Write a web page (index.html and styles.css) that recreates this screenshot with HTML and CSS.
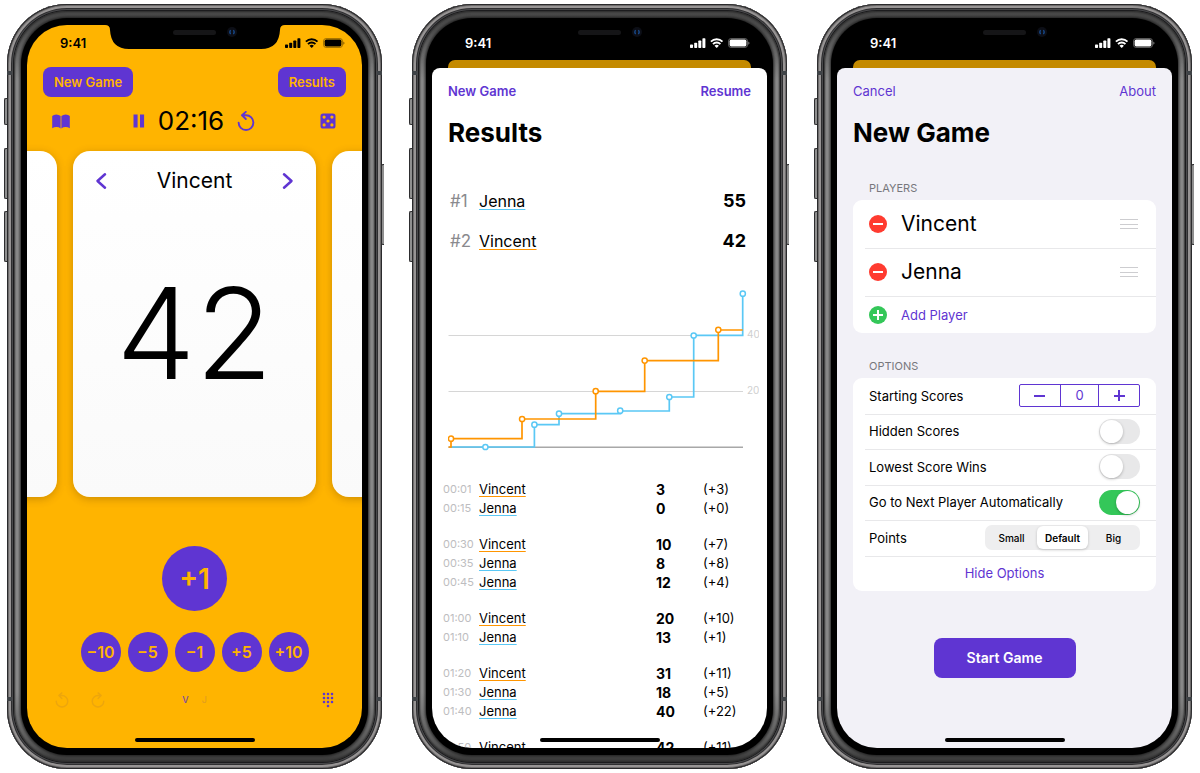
FILE: index.html
```html
<!DOCTYPE html>
<html lang="en">
<head>
<meta charset="utf-8">
<title>Score Keeper</title>
<link rel="stylesheet" href="styles.css">
</head>
<body>
<svg class="symbols" aria-hidden="true">
  <symbol id="notch" viewBox="0 0 180 24">
    <path d="M0 0Q5 0 5 5Q6 24 24 24H156Q174 24 175 5Q175 0 180 0Z" fill="#000"/>
    <rect x="68" y="5" width="43" height="5" rx="2.5" fill="#151517"/>
    <circle cx="127" cy="7" r="5" fill="#0c0e16"/>
    <path d="M125.600 5.200Q124 7.200 125.600 9.200M128.400 5.200Q130 7.200 128.400 9.200" fill="none" stroke="#174a8c" stroke-width="1.300"/>
  </symbol>
  <symbol id="status" viewBox="0 0 60 12">
    <g fill="currentColor">
      <rect x="0" y="7.500" width="3" height="3.500" rx=".7"/>
      <rect x="4.200" y="5.800" width="3" height="5.200" rx=".7"/>
      <rect x="8.300" y="3.600" width="3" height="7.400" rx=".7"/>
      <rect x="12.400" y="1.200" width="3" height="9.800" rx=".7"/>
      <path d="M26.700 11.100l2.200-2.300a3.200 3.200 0 0 0-4.400 0z"/>
      <rect x="39.600" y="2.600" width="16.800" height="6.800" rx="1.600"/>
      <path d="M58.300 4.500q1.200.5 1.200 1.600t-1.200 1.600z" opacity=".5"/>
    </g>
    <path d="M20.900 4.600a8.300 8.300 0 0 1 11.600 0M23 7.100a5.200 5.200 0 0 1 7.400 0" fill="none" stroke="currentColor" stroke-width="1.900"/>
    <rect x="38.500" y="1.500" width="19" height="9" rx="2.600" fill="none" stroke="currentColor" opacity=".35"/>
  </symbol>
  <symbol id="restart" viewBox="0 0 18 20">
    <path d="M1.600 11.600A7.400 7.400 0 1 0 9 4.200H5.200M8.800.9L5 4.300L8.800 8" fill="none" stroke="currentColor" stroke-width="1.900" stroke-linecap="round" stroke-linejoin="round"/>
  </symbol>
</svg>

<main class="phones">
  <section class="phone" aria-label="Game">
    <i class="key key-mute"></i><i class="key key-up"></i><i class="key key-down"></i><i class="key key-power"></i>
    <div class="band"><div class="glass"><div class="screen game">
      <svg class="notch" aria-hidden="true"><use href="#notch"/></svg>
      <header class="status"><span>9:41</span><svg aria-hidden="true"><use href="#status"/></svg></header>
      <nav class="actions">
        <button class="solid" type="button">New Game</button>
        <button class="solid" type="button">Results</button>
      </nav>
      <div class="tools">
        <button class="icon" type="button" aria-label="Rules">
          <svg width="18" height="15" viewBox="0 0 18 15"><path d="M8.600 2.100Q6.800.4 4.300.4Q1.700.4.200 1.900V14.300Q2 13.100 4.500 13.100Q6.900 13.100 8.600 14.400ZM9.400 2.100Q11.200.4 13.700.4Q16.300.4 17.800 1.900V14.300Q16 13.100 13.500 13.100Q11.100 13.100 9.400 14.400Z" fill="currentColor"/></svg>
        </button>
        <div class="timer">
          <button class="icon" type="button" aria-label="Pause">
            <svg width="12" height="14" viewBox="0 0 12 14"><path d="M.5.500H4.600V13.500H.5ZM7 .5H11.100V13.500H7Z" fill="currentColor"/></svg>
          </button>
          <time>02:16</time>
          <button class="icon" type="button" aria-label="Restart timer"><svg width="18" height="20"><use href="#restart"/></svg></button>
        </div>
        <button class="icon die" type="button" aria-label="Roll dice">
          <svg width="16" height="16" viewBox="0 0 16 16"><rect x=".5" y=".5" width="15" height="15" rx="2.600" fill="currentColor"/><g fill="#ffb400"><circle cx="4.100" cy="4.100" r="1.600"/><circle cx="11.900" cy="4.100" r="1.600"/><circle cx="8" cy="8" r="1.600"/><circle cx="4.100" cy="11.900" r="1.600"/><circle cx="11.900" cy="11.900" r="1.600"/></g></svg>
        </button>
      </div>
      <div class="cards">
        <article class="card"></article>
        <article class="card">
          <div class="card-head">
            <button class="icon" type="button" aria-label="Previous player"><svg width="12" height="18" viewBox="0 0 12 18"><path d="M10 2.300L2.500 9L10 15.700" fill="none" stroke="currentColor" stroke-width="2.500" stroke-linecap="round" stroke-linejoin="round"/></svg></button>
            <h2>Vincent</h2>
            <button class="icon" type="button" aria-label="Next player"><svg width="12" height="18" viewBox="0 0 12 18"><path d="M2 2.300L9.500 9L2 15.700" fill="none" stroke="currentColor" stroke-width="2.500" stroke-linecap="round" stroke-linejoin="round"/></svg></button>
          </div>
          <p class="score">42</p>
        </article>
        <article class="card"></article>
      </div>
      <button class="round big" type="button">+1</button>
      <div class="steps">
        <button class="round" type="button">−10</button>
        <button class="round" type="button">−5</button>
        <button class="round" type="button">−1</button>
        <button class="round" type="button">+5</button>
        <button class="round" type="button">+10</button>
      </div>
      <footer class="bottom">
        <div class="history">
          <button class="icon" type="button" aria-label="Undo" disabled><svg width="14" height="16"><use href="#restart"/></svg></button>
          <button class="icon flip" type="button" aria-label="Redo" disabled><svg width="14" height="16"><use href="#restart"/></svg></button>
        </div>
        <div class="pager"><b>V</b><span>J</span></div>
        <button class="icon pad" type="button" aria-label="Keypad">
          <svg width="12" height="16" viewBox="0 0 12 16"><path d="M1 1H3V3H1ZM5 1H7V3H5ZM9 1H11V3H9ZM1 5H3V7H1ZM5 5H7V7H5ZM9 5H11V7H9ZM1 9H3V11H1ZM5 9H7V11H5ZM9 9H11V11H9ZM5 13H7V15H5Z" fill="currentColor" stroke="currentColor" stroke-width=".3"/></svg>
        </button>
      </footer>
      <i class="home"></i>
    </div></div></div>
  </section>

  <section class="phone" aria-label="Results">
    <i class="key key-mute"></i><i class="key key-up"></i><i class="key key-down"></i><i class="key key-power"></i>
    <div class="band"><div class="glass"><div class="screen dark">
      <svg class="notch" aria-hidden="true"><use href="#notch"/></svg>
      <header class="status"><span>9:41</span><svg aria-hidden="true"><use href="#status"/></svg></header>
      <div class="behind"></div>
      <div class="sheet">
        <nav class="bar medium"><a href="#">New Game</a><a href="#">Resume</a></nav>
        <h1>Results</h1>
        <ol class="ranks">
          <li><span>#1</span><u class="jenna">Jenna</u><b>55</b></li>
          <li><span>#2</span><u class="vincent">Vincent</u><b>42</b></li>
        </ol>
        <svg class="chart" viewBox="0 0 311 166" role="img" aria-label="Scores over time">
          <path d="M.5 49.500H295M.5 105.500H295" stroke="#d6d6d6"/>
          <path d="M.5 161.200H295" stroke="#a8a8a8" stroke-width="1.400"/>
          <g fill="none" stroke-width="1.700">
            <path stroke="#5ac8f5" d="M3 161H86.400V138.700H111V127.700H172.400V125H221.300V111H245.700V49.400H294.700V8"/>
            <path stroke="#ff9500" d="M.5 161H3V152.700H74V133H147.700V105.400H196.700V74.700H270.300V44H294.700"/>
          </g>
          <g fill="#fff" stroke="#5ac8f5" stroke-width="1.500">
            <circle cx="37.400" cy="161" r="2.600"/><circle cx="86.400" cy="138.700" r="2.600"/><circle cx="111" cy="127.700" r="2.600"/><circle cx="172.200" cy="124.700" r="2.600"/><circle cx="221.300" cy="111" r="2.600"/><circle cx="245.700" cy="49.500" r="2.600"/><circle cx="294.800" cy="7.700" r="2.600"/>
          </g>
          <g fill="#fff" stroke="#ff9500" stroke-width="1.500">
            <circle cx="3" cy="152.700" r="2.600"/><circle cx="74.100" cy="133" r="2.600"/><circle cx="147.700" cy="105.200" r="2.600"/><circle cx="196.700" cy="74.600" r="2.600"/><circle cx="270.300" cy="43.800" r="2.600"/>
          </g>
          <text x="299" y="52">40</text><text x="299" y="108">20</text>
        </svg>
        <table class="log">
          <tbody>
            <tr><td>00:01</td><td><u class="vincent">Vincent</u></td><td>3</td><td>(+3)</td></tr>
            <tr><td>00:15</td><td><u class="jenna">Jenna</u></td><td>0</td><td>(+0)</td></tr>
          </tbody>
          <tbody>
            <tr><td>00:30</td><td><u class="vincent">Vincent</u></td><td>10</td><td>(+7)</td></tr>
            <tr><td>00:35</td><td><u class="jenna">Jenna</u></td><td>8</td><td>(+8)</td></tr>
            <tr><td>00:45</td><td><u class="jenna">Jenna</u></td><td>12</td><td>(+4)</td></tr>
          </tbody>
          <tbody>
            <tr><td>01:00</td><td><u class="vincent">Vincent</u></td><td>20</td><td>(+10)</td></tr>
            <tr><td>01:10</td><td><u class="jenna">Jenna</u></td><td>13</td><td>(+1)</td></tr>
          </tbody>
          <tbody>
            <tr><td>01:20</td><td><u class="vincent">Vincent</u></td><td>31</td><td>(+11)</td></tr>
            <tr><td>01:30</td><td><u class="jenna">Jenna</u></td><td>18</td><td>(+5)</td></tr>
            <tr><td>01:40</td><td><u class="jenna">Jenna</u></td><td>40</td><td>(+22)</td></tr>
          </tbody>
          <tbody>
            <tr><td>01:50</td><td><u class="vincent">Vincent</u></td><td>42</td><td>(+11)</td></tr>
          </tbody>
        </table>
      </div>
      <i class="home"></i>
    </div></div></div>
  </section>

  <section class="phone" aria-label="New game">
    <i class="key key-mute"></i><i class="key key-up"></i><i class="key key-down"></i><i class="key key-power"></i>
    <div class="band"><div class="glass"><div class="screen dark">
      <svg class="notch" aria-hidden="true"><use href="#notch"/></svg>
      <header class="status"><span>9:41</span><svg aria-hidden="true"><use href="#status"/></svg></header>
      <div class="behind"></div>
      <form class="sheet grouped">
        <nav class="bar"><a href="#">Cancel</a><a href="#">About</a></nav>
        <h1>New Game</h1>
        <h3>PLAYERS</h3>
        <ul class="group players">
          <li><button class="dot red" type="button" aria-label="Remove Vincent"></button><span>Vincent</span><i class="grip"></i></li>
          <li><button class="dot red" type="button" aria-label="Remove Jenna"></button><span>Jenna</span><i class="grip"></i></li>
          <li class="add"><button type="button"><i class="dot green"></i>Add Player</button></li>
        </ul>
        <h3 class="second">OPTIONS</h3>
        <div class="group options">
          <div class="row"><span>Starting Scores</span>
            <div class="stepper"><button class="minus" type="button" aria-label="Decrease"></button><output>0</output><button class="plus" type="button" aria-label="Increase"></button></div>
          </div>
          <div class="row"><label for="hidden">Hidden Scores</label><input class="switch" id="hidden" type="checkbox"></div>
          <div class="row"><label for="lowest">Lowest Score Wins</label><input class="switch" id="lowest" type="checkbox"></div>
          <div class="row"><label for="auto">Go to Next Player Automatically</label><input class="switch" id="auto" type="checkbox" checked></div>
          <div class="row"><span>Points</span>
            <div class="segments" role="radiogroup" aria-label="Points">
              <label><input type="radio" name="points">Small</label>
              <label><input type="radio" name="points" checked>Default</label>
              <label><input type="radio" name="points">Big</label>
            </div>
          </div>
          <div class="row center"><button class="link" type="button">Hide Options</button></div>
        </div>
        <button class="start" type="button">Start Game</button>
      </form>
      <i class="home"></i>
    </div></div></div>
  </section>
</main>
</body>
</html>
```

FILE: styles.css
```css
:root {
  --purple: #5f35d2;
  --yellow: #ffb400;
  --line: #e8e8ea;
}
* { box-sizing: border-box; }
body {
  margin: 0;
  background: #fff;
  color: #000;
  font-family: Inter, "Liberation Sans", sans-serif;
  font-size: 13px;
  line-height: 18px;
}
h1, h2, h3, p, ol, ul { margin: 0; padding: 0; }
ol, ul { list-style: none; }
button { margin: 0; padding: 0; border: 0; background: none; color: inherit; font: inherit; }
a { color: var(--purple); text-decoration: none; }
.symbols { position: absolute; width: 0; height: 0; }

/* Device frame */
.phones { display: flex; gap: 30px; height: 100vh; padding: 4px 8px 4px 7px; }
.phone {
  position: relative;
  flex: 1;
  display: flex;
  padding: 7px;
  border-radius: 60px;
  background: #1b1b1d;
  box-shadow: inset 0 0 0 1px #2a2a2c, inset 0 0 0 2px #6e6c6c, inset 0 0 0 4px #979494, inset 0 0 0 5px #2e2e30, inset 0 0 0 6px #4a4a4c;
}
.phone::before, .phone::after {
  content: "";
  position: absolute;
  inset: 67px 0 auto;
  height: 4px;
  background: linear-gradient(to right, #3f4347 5px, transparent 5px calc(100% - 5px), #3f4347 calc(100% - 5px));
}
.phone::after { inset: auto 0 68px; }
.band {
  flex: 1;
  display: flex;
  min-width: 0;
  padding: 7px;
  border-radius: 53px;
  background: linear-gradient(#484848, #505050 20px, #8c8c8c 70px, #8c8c8c calc(100% - 70px), #585858 calc(100% - 16px), #383838);
  box-shadow: inset 0 0 2px 1px #2a2a2a;
}
.glass { flex: 1; display: flex; min-width: 0; padding: 7px 6px; border-radius: 46px; background: #000; box-shadow: 0 0 3px 1px #1c1c1c; }
.screen {
  position: relative;
  flex: 1;
  display: flex;
  flex-direction: column;
  min-width: 0;
  border-radius: 40px;
  overflow: hidden;
}
.key { position: absolute; left: -3px; width: 3px; border: 1px solid #2d2d2f; border-right: 0; border-radius: 2px 0 0 2px; background: #8f8f8f; }
.key-mute { top: 94px; height: 27px; }
.key-up { top: 144px; height: 51px; }
.key-down { top: 207px; height: 51px; }
.key-power { top: 160px; left: auto; right: -2px; height: 81px; }
.notch { position: absolute; top: 0; left: calc(50% - 90px); width: 180px; height: 24px; }
.home { position: absolute; bottom: 6px; left: calc(50% - 60px); width: 120px; height: 4px; border-radius: 2px; background: #000; }
.status {
  display: flex;
  flex: none;
  align-items: center;
  justify-content: space-between;
  height: 35px;
  padding: 0 17px 0 33px;
  font-weight: 600;
}
.status svg { width: 60px; height: 12px; }

/* Game */
.game { background: var(--yellow); }
.icon { display: grid; place-items: center; color: var(--purple); }
.icon svg { display: block; }
.actions { display: flex; justify-content: space-between; margin-top: 7px; padding: 0 16px; }
.solid { height: 30px; padding: 0 11px; border-radius: 8px; background: var(--purple); color: var(--yellow); font-weight: 600; }
.tools { display: grid; grid-template-columns: 1fr auto 1fr; align-items: center; height: 48px; padding: 0 26px 0 25px; }
.tools > .icon { justify-self: start; }
.tools > .die { justify-self: end; }
.timer { display: flex; align-items: center; gap: 13px; }
.timer time { font-size: 26px; line-height: 30px; }
.cards { flex: 1; display: flex; justify-content: center; gap: 16px; min-height: 0; margin-top: 6px; }
.card {
  flex: none;
  display: flex;
  flex-direction: column;
  width: calc(100% - 92px);
  border-radius: 17px;
  background: linear-gradient(#fff, #fafafa);
  box-shadow: 0 2px 8px rgba(90, 50, 0, .3);
}
.card-head { display: flex; align-items: center; justify-content: space-between; height: 60px; padding: 0 22px; }
.card-head h2 { font-size: 21px; font-weight: 400; line-height: 28px; }
.score { flex: 1; display: grid; place-items: center; padding-bottom: 42px; font-size: 126px; font-weight: 300; line-height: 140px; }
.round { width: 40px; height: 40px; border-radius: 50%; background: var(--purple); color: var(--yellow); font-size: 16px; font-weight: 600; }
.big { align-self: center; flex: none; width: 65px; height: 65px; margin-top: 49px; font-size: 28px; }
.steps { display: flex; justify-content: center; gap: 7px; margin-top: 21px; }
.bottom { display: grid; grid-template-columns: 1fr auto 1fr; align-items: center; height: 20px; margin: 18px 28px 38px; }
.history { display: flex; gap: 22px; }
.history .icon { color: #eda60c; }
.flip { transform: scaleX(-1); }
.pager { display: flex; gap: 13px; font-size: 9px; color: #e09c20; }
.pager b { color: #7a4aa0; font-weight: 500; }
.pad { justify-self: end; }

/* Sheets */
.dark { background: #000; }
.dark .status { color: #fff; }
.behind { flex: none; height: 8px; margin: 0 16px; border-radius: 7px 7px 0 0; background: #c48a00; }
.sheet { flex: 1; min-height: 0; overflow: hidden; border-radius: 8px 8px 0 0; background: #fff; }
.grouped { padding: 0 16px; background: #f2f1f7; }
.bar { display: flex; align-items: center; justify-content: space-between; height: 46px; padding: 0 16px; }
.grouped .bar { padding: 0; }
.medium { font-weight: 600; }
h1 { padding-left: 16px; font-size: 26px; font-weight: 700; line-height: 38px; }
.grouped h1 { padding-left: 0; }

.ranks { margin: 29px 21px 25px 18px; font-size: 16px; }
.ranks li { display: grid; grid-template-columns: 29px 1fr auto; align-items: center; height: 40px; }
.ranks span { color: #8a8a8e; font-size: 17px; }
.ranks u { justify-self: start; }
.ranks b { font-size: 18px; }
u { text-decoration: underline; text-decoration-thickness: 1px; text-decoration-skip-ink: none; text-underline-offset: 2px; }
.jenna { text-decoration-color: #5ac8f5; }
.vincent { text-decoration-color: #ff9500; }
.chart { display: block; width: calc(100% - 24px); margin: 0 8px 28px 16px; }
.chart text { fill: #cfcfcf; font-size: 10px; }
.log { width: 100%; border-collapse: collapse; table-layout: fixed; }
.log td { height: 19px; padding: 0; line-height: 19px; }
.log tbody + tbody tr:first-child td { padding-top: 17px; }
.log td:nth-child(1) { width: 47px; padding-left: 11px; color: #bdbdc0; font-size: 11px; }
.log td:nth-child(3) { width: 47px; font-size: 14px; font-weight: 700; }
.log td:nth-child(4) { width: 64px; }

/* New game form */
h3 { height: 24px; margin-top: 24px; padding-left: 16px; color: #77777c; font-size: 11px; font-weight: 400; line-height: 24px; }
.second { margin-top: 21px; }
.group { border-radius: 9px; background: #fff; }
.players li, .row { position: relative; display: flex; align-items: center; padding: 0 16px; }
.players li + li::before, .row + .row::before { content: ""; position: absolute; inset: 0 0 auto 12px; height: 1px; background: var(--line); }
.players li { height: 48px; gap: 14px; }
.players span { flex: 1; font-size: 21px; line-height: 28px; }
.players .add { height: 37px; }
.add button { display: flex; align-items: center; gap: 14px; color: var(--purple); }
.dot {
  flex: none;
  width: 18px;
  height: 18px;
  border-radius: 50%;
  background: linear-gradient(#fff, #fff) center / 10px 2px no-repeat #ff3b30;
}
.green { background: linear-gradient(#fff, #fff) center / 10px 2px no-repeat, linear-gradient(#fff, #fff) center / 2px 10px no-repeat #34c759; }
.grip { width: 18px; height: 10px; margin-right: 2px; border: solid #cdcdd0; border-width: 1px 0; background: linear-gradient(#cdcdd0, #cdcdd0) center / 100% 1px no-repeat; }
.options { display: grid; grid-template-rows: repeat(6, 1fr); min-height: 213px; }
.row { justify-content: space-between; }
.center { justify-content: center; }
.link { color: var(--purple); }
.stepper { display: grid; grid-template-columns: 1fr 1fr 1fr; width: 121px; height: 23px; border: 1px solid var(--purple); border-radius: 2px; color: var(--purple); line-height: 21px; text-align: center; }
.stepper output { border: solid var(--purple); border-width: 0 1px; }
.minus { background: linear-gradient(var(--purple), var(--purple)) center / 11px 2px no-repeat; }
.plus { background: linear-gradient(var(--purple), var(--purple)) center / 11px 2px no-repeat, linear-gradient(var(--purple), var(--purple)) center / 2px 11px no-repeat; }
.switch { appearance: none; display: flex; width: 41px; height: 25px; margin: 0; padding: 1px; border-radius: 13px; background: #e8e8e9; }
.switch::before { content: ""; width: 23px; height: 23px; border-radius: 50%; background: #fff; box-shadow: 0 1px 3px rgba(0, 0, 0, .25); }
.switch:checked { justify-content: flex-end; background: #34c759; }
.segments { display: grid; grid-template-columns: 1fr 1fr 1fr; width: 155px; height: 25px; padding: 1px; border-radius: 7px; background: #eeeeef; font-size: 10px; font-weight: 500; }
.segments label { display: grid; place-items: center; border-radius: 6px; }
.segments input { position: absolute; appearance: none; margin: 0; }
.segments label:has(:checked) { background: #fff; box-shadow: 0 1px 3px rgba(0, 0, 0, .2); font-weight: 600; }
.start { display: block; width: 142px; height: 40px; margin: 47px auto 0; border-radius: 8px; background: var(--purple); color: #fff; font-size: 14px; font-weight: 600; }
```
